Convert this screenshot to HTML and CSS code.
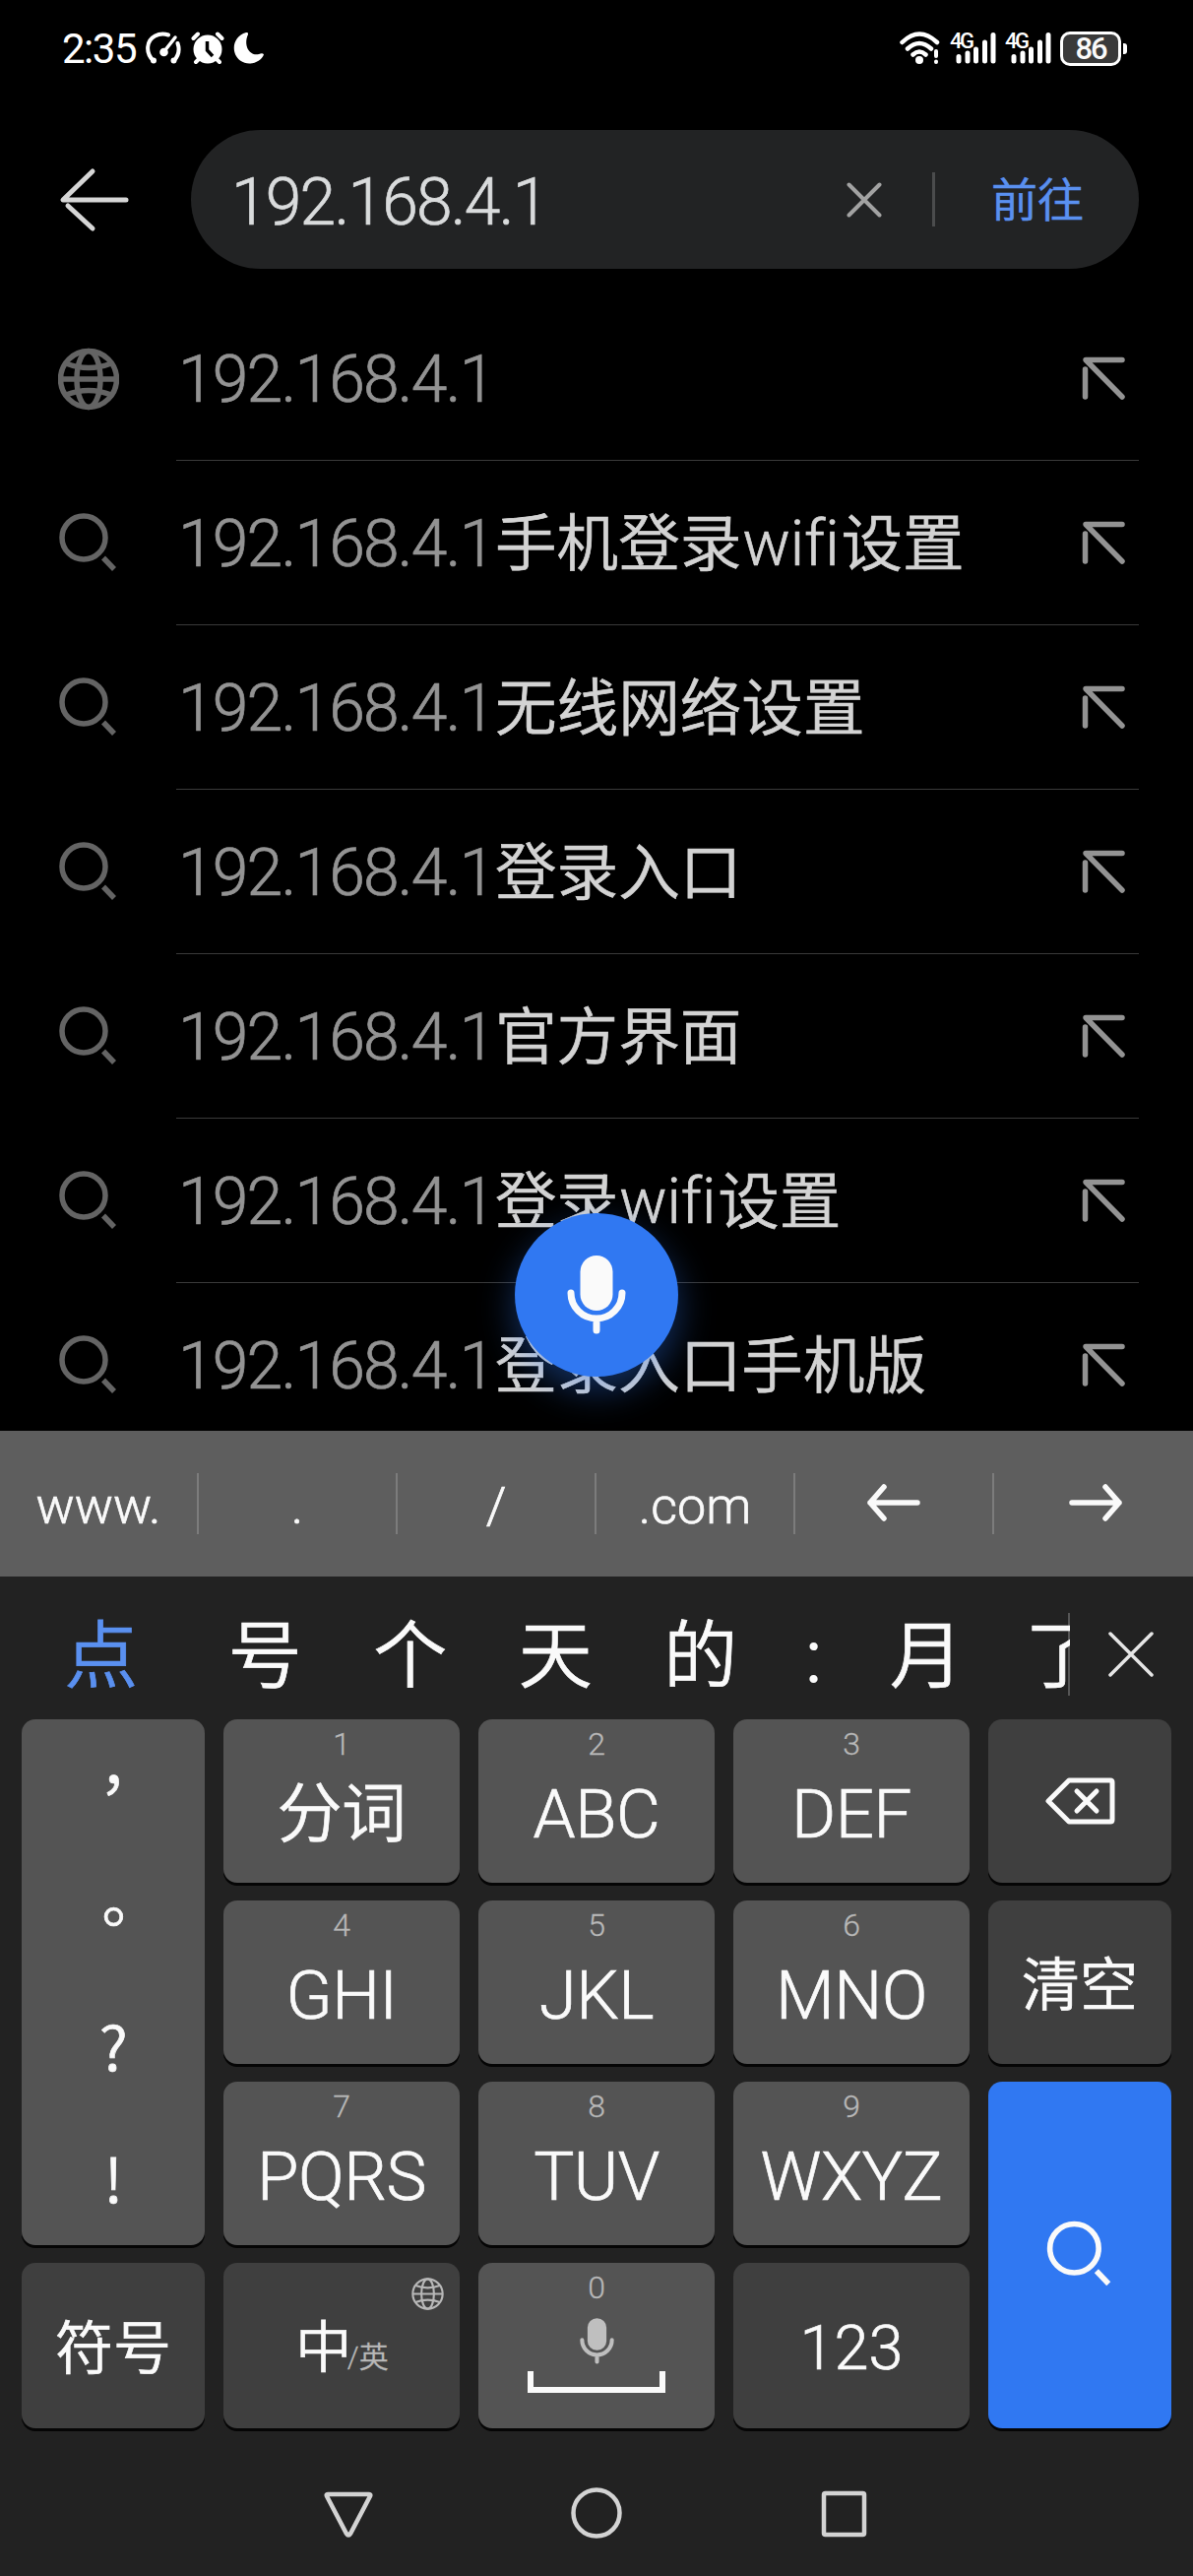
FILE: index.html
```
<!DOCTYPE html>
<html lang="zh-CN">
<head>
  <meta charset="UTF-8">
  <title>192.168.4.1</title>
  <link rel="stylesheet" href="styles.css">
</head>
<body>
  <!-- shared icons -->
  <svg class="defs" width="0" height="0">
    <symbol id="globe" viewBox="0 0 62 62">
      <g fill="none" stroke="currentColor">
        <circle cx="31" cy="31" r="28.5"/>
        <ellipse cx="31" cy="31" rx="12" ry="28.5"/>
        <path d="M3 31H59M8 15Q31 24 54 15M8 47Q31 38 54 47"/>
      </g>
    </symbol>
    <symbol id="search" viewBox="0 0 62 64">
      <g fill="none" stroke="currentColor">
        <circle cx="26" cy="26" r="22"/>
        <path d="M46 46.500L57 58"/>
      </g>
    </symbol>
    <symbol id="fill" viewBox="0 0 44 44">
      <path d="M41 3.500H4L41 41M3.500 13V41" fill="none" stroke="currentColor" stroke-width="5.500" stroke-linecap="round" stroke-linejoin="round"/>
    </symbol>
    <symbol id="mic" viewBox="0 0 60 80">
      <rect x="13.500" y="0" width="33" height="56" rx="16.500" fill="currentColor"/>
      <path d="M4 38a26 26 0 0 0 52 0M30 65V76" fill="none" stroke="currentColor" stroke-width="7" stroke-linecap="round"/>
    </symbol>
    <symbol id="signal" viewBox="0 0 42 34">
      <path d="M4 25.500V30M13 22V30M21.500 18V30M30.500 11V30M39 3.500V30" stroke="currentColor" stroke-width="5" stroke-linecap="round"/>
    </symbol>
  </svg>

  <div class="screen">
    <header class="status">
      <span class="time">2:35</span>
      <svg class="gauge" width="36" height="34" viewBox="0 0 36 34">
        <g fill="none" stroke="#fff" stroke-width="4" stroke-linecap="round">
          <path d="M8 30C-1 21 1 9 9.500 4.500Q16 1 23 3.500"/>
          <path d="M32.500 12Q36 22 28.500 30"/>
          <path d="M19 20L30 6" stroke-width="3.500"/>
        </g>
        <circle cx="18.500" cy="21" r="4.300" fill="#fff"/>
        <circle cx="8" cy="29.500" r="3" fill="#fff"/><circle cx="28.500" cy="29.500" r="3" fill="#fff"/>
      </svg>
      <svg class="alarm" width="34" height="34" viewBox="0 0 34 34">
        <circle cx="17" cy="18" r="14.500" fill="#fff"/>
        <path d="M2.500 7L7 2.500M31.500 7L27 2.500M8 28L5 31M26 28L29 31" stroke="#fff" stroke-width="4" stroke-linecap="round"/>
        <path d="M16.500 10V19L22 25" fill="none" stroke="#000" stroke-width="3.500"/>
      </svg>
      <svg class="moon" width="32" height="34" viewBox="0 0 32 34">
        <path d="M13 1C-1 5-3 22 7 29.500C16 36 28 31 31 23.500Q30 21.500 26 23C16 25 10 14 15 3Q15.500.500 13 1Z" fill="#fff"/>
      </svg>
      <span class="spacer"></span>
      <svg class="wifi" width="42" height="34" viewBox="0 0 42 34">
        <g fill="none" stroke="#fff" stroke-width="4.500" stroke-linecap="round">
          <path d="M2.500 11Q20 -6 38 11M8 17.500Q20 6.500 32 17.500M13.500 23.500Q20 17.500 26.500 23.500"/>
        </g>
        <circle cx="20" cy="29" r="4" fill="#fff"/>
        <path d="M37 20V25M37 30.500V31" stroke="#fff" stroke-width="4" stroke-linecap="round"/>
      </svg>
      <span class="cell"><b>4G</b><svg width="42" height="34"><use href="#signal"/></svg></span>
      <span class="cell"><b>4G</b><svg width="42" height="34"><use href="#signal"/></svg></span>
      <span class="battery">86</span>
    </header>

    <div class="address">
      <svg class="back" width="72" height="66" viewBox="0 0 72 66">
        <path d="M34 4L4 33H68M9 39L34 62" fill="none" stroke="#d6d6d6" stroke-width="5" stroke-linecap="round" stroke-linejoin="round"/>
      </svg>
      <div class="pill">
        <span class="url">192.168.4.1</span>
        <svg class="clear" width="36" height="36" viewBox="0 0 36 36">
          <path d="M2.500 2.500L33.500 33.500M33.500 2.500L2.500 33.500" stroke="#a2a2a2" stroke-width="4" stroke-linecap="round"/>
        </svg>
        <span class="bar"></span>
        <span class="go">前往</span>
      </div>
    </div>

    <main class="results">
      <div class="row"><svg class="lead"><use href="#globe"/></svg><div class="line"><span class="ip">192.168.4.1</span><svg class="fill"><use href="#fill"/></svg></div></div>
      <div class="row"><svg class="lead"><use href="#search"/></svg><div class="line"><span class="ip">192.168.4.1</span>手机登录<i>wifi</i>设置<svg class="fill"><use href="#fill"/></svg></div></div>
      <div class="row"><svg class="lead"><use href="#search"/></svg><div class="line"><span class="ip">192.168.4.1</span>无线网络设置<svg class="fill"><use href="#fill"/></svg></div></div>
      <div class="row"><svg class="lead"><use href="#search"/></svg><div class="line"><span class="ip">192.168.4.1</span>登录入口<svg class="fill"><use href="#fill"/></svg></div></div>
      <div class="row"><svg class="lead"><use href="#search"/></svg><div class="line"><span class="ip">192.168.4.1</span>官方界面<svg class="fill"><use href="#fill"/></svg></div></div>
      <div class="row"><svg class="lead"><use href="#search"/></svg><div class="line"><span class="ip">192.168.4.1</span>登录<i>wifi</i>设置<svg class="fill"><use href="#fill"/></svg></div></div>
      <div class="row"><svg class="lead"><use href="#search"/></svg><div class="line"><span class="ip">192.168.4.1</span>登录入口手机版<svg class="fill"><use href="#fill"/></svg></div></div>
      <div class="voice"><svg width="60" height="80"><use href="#mic"/></svg></div>
    </main>

    <section class="keyboard">
      <div class="shortcuts">
        <span>www.</span>
        <span>.</span>
        <span>/</span>
        <span>.com</span>
        <span><svg width="54" height="38" viewBox="0 0 54 38"><path d="M17 3L3 19L17 35M3 19H51" fill="none" stroke="#fafafa" stroke-width="5.500" stroke-linecap="round" stroke-linejoin="round"/></svg></span>
        <span><svg width="54" height="38" viewBox="0 0 54 38"><path d="M37 3L51 19L37 35M51 19H3" fill="none" stroke="#fafafa" stroke-width="5.500" stroke-linecap="round" stroke-linejoin="round"/></svg></span>
      </div>

      <div class="candidates">
        <div class="words">
          <span class="first">点</span><span>号</span><span>个</span><span>天</span><span>的</span><span class="colon">:</span><span>月</span><span class="last">了</span>
        </div>
        <svg class="close" width="46" height="46" viewBox="0 0 46 46">
          <path d="M2 2L44 44M44 2L2 44" stroke="#e6e6e6" stroke-width="3.500" stroke-linecap="round"/>
        </svg>
      </div>

      <div class="keys">
        <div class="key marks"><span>，</span><span>。</span><span>?</span><span>!</span></div>
        <div class="key"><small>1</small><span class="cn">分词</span></div>
        <div class="key"><small>2</small><span>ABC</span></div>
        <div class="key"><small>3</small><span>DEF</span></div>
        <div class="key dark">
          <svg width="71" height="48" viewBox="0 0 71 48"><g fill="none" stroke="#fafafa" stroke-width="5" stroke-linecap="round" stroke-linejoin="round"><path d="M24 3H66Q68 3 68 5V43Q68 45 66 45H24L3 24Z"/><path d="M32 14L52 34M52 14L32 34"/></g></svg>
        </div>
        <div class="key"><small>4</small><span>GHI</span></div>
        <div class="key"><small>5</small><span>JKL</span></div>
        <div class="key"><small>6</small><span>MNO</span></div>
        <div class="key dark word">清空</div>
        <div class="key"><small>7</small><span>PQRS</span></div>
        <div class="key"><small>8</small><span>TUV</span></div>
        <div class="key"><small>9</small><span>WXYZ</span></div>
        <div class="key enter"><svg width="70" height="72"><use href="#search"/></svg></div>
        <div class="key dark word">符号</div>
        <div class="key dark lang"><span>中</span><em>/英</em><svg class="mini"><use href="#globe"/></svg></div>
        <div class="key space"><small>0</small><svg width="35" height="47"><use href="#mic"/></svg><div class="bracket"></div></div>
        <div class="key dark num">123</div>
      </div>

      <nav class="nav">
        <svg width="52" height="52" viewBox="0 0 52 52"><path d="M5 7H47Q49 7 48 9L28 47Q26 50 24 47L4 9Q3 7 5 7Z" fill="none" stroke="#d3d3d3" stroke-width="4.500"/></svg>
        <svg width="52" height="52" viewBox="0 0 52 52"><circle cx="26" cy="26" r="23.500" fill="none" stroke="#d3d3d3" stroke-width="4.500"/></svg>
        <svg width="52" height="52" viewBox="0 0 52 52"><rect x="5" y="6" width="41" height="42" rx="1.500" fill="none" stroke="#d3d3d3" stroke-width="4.500"/></svg>
      </nav>
    </section>
  </div>
</body>
</html>
```
FILE: styles.css
```
* {
  box-sizing: border-box;
}

body {
  margin: 0;
  background: #000;
  font-family: Roboto, "Noto Sans CJK SC", sans-serif;
  font-weight: 350;
  color: #fafafa;
  -webkit-text-stroke-width: 0.7px;
}

svg {
  display: block;
  flex: none;
}

.defs {
  position: absolute;
}

.screen {
  width: 1212px;
  height: 2616px;
  overflow: hidden;
  display: flex;
  flex-direction: column;
}

/* status bar */
.status {
  height: 132px;
  padding: 32px 73px 0 63px;
  display: flex;
  align-items: flex-start;
  -webkit-text-stroke-width: 0;
}

.time {
  width: 85px;
  font-size: 42px;
  line-height: 36px;
  font-weight: 400;
  letter-spacing: -1.5px;
  color: #fff;
}

.alarm {
  margin-left: 10px;
}

.moon {
  margin-left: 9px;
}

.spacer {
  flex: 1;
}

.cell {
  position: relative;
  width: 46px;
  margin-left: 9px;
  color: #fff;
}

.cell + .cell {
  margin-left: 10px;
}

.cell svg {
  margin-left: 5px;
}

.cell b {
  position: absolute;
  left: 0;
  top: 0;
  font-size: 22px;
  line-height: 20px;
  font-weight: 500;
  letter-spacing: -2.5px;
}

.battery {
  position: relative;
  width: 62px;
  height: 35px;
  margin-left: 10px;
  border: 3px solid #fff;
  border-radius: 10px;
  background: #3a3a3a;
  text-align: center;
  font-size: 31px;
  line-height: 30px;
  font-weight: 500;
  letter-spacing: -2px;
}

.battery::after {
  content: "";
  position: absolute;
  right: -9px;
  top: 9px;
  width: 4px;
  height: 11px;
  border-radius: 0 3px 3px 0;
  background: #fff;
}

/* address bar */
.address {
  height: 141px;
  margin-bottom: 28px;
  padding: 0 55px 0 60px;
  display: flex;
  align-items: center;
}

.pill {
  flex: 1;
  height: 141px;
  margin-left: 62px;
  padding: 0 56px 0 41px;
  border-radius: 71px;
  background: #222324;
  display: flex;
  align-items: center;
}

.url {
  flex: 1;
  padding-top: 5px;
  font-size: 66px;
  letter-spacing: -1.8px;
  color: #d9dbdc;
}

.bar {
  width: 3px;
  height: 55px;
  margin: 0 57px 0 51px;
  background: #4b4c4d;
}

.go {
  padding-top: 3px;
  font-size: 47px;
  line-height: 60px;
  color: #5a90f0;
}

/* suggestions */
.results {
  position: relative;
  height: 1152px;
  overflow: hidden;
}

.row {
  height: 167px;
  padding: 0 55px 0 59px;
  display: flex;
  align-items: center;
}

.lead {
  width: 62px;
  height: 64px;
  color: #646464;
  stroke-width: 5.5px;
}

.line {
  flex: 1;
  height: 167px;
  margin-left: 58px;
  padding: 4px 14px 0 2px;
  border-bottom: 1px solid #3a3a3a;
  display: flex;
  align-items: center;
  font-size: 62.6px;
  line-height: 80px;
  color: #d3d3d3;
  white-space: nowrap;
}

.line i {
  width: 101px;
  padding-left: 1px;
  font-style: normal;
  font-size: 64px;
  font-variant-ligatures: none;
}

.ip {
  width: 322px;
  font-size: 66px;
  letter-spacing: -1.8px;
  color: #939393;
}

.fill {
  width: 44px;
  height: 44px;
  margin: -4px 0 0 auto;
  color: #939393;
}

.voice {
  position: absolute;
  left: 523px;
  top: 931px;
  width: 166px;
  height: 166px;
  border-radius: 50%;
  background: #3078f2;
  box-shadow: 0 14px 36px rgba(48, 120, 242, 0.4);
  display: flex;
  align-items: center;
  justify-content: center;
}

/* keyboard */
.keyboard {
  flex: 1;
  background: #222;
}

.shortcuts {
  height: 148px;
  background: #5e5e5e;
  display: grid;
  grid-template-columns: repeat(6, 1fr);
  align-items: center;
}

.shortcuts span {
  height: 62px;
  border-right: 2px solid #7c7c7c;
  display: flex;
  align-items: center;
  justify-content: center;
  padding-top: 6px;
  font-size: 52px;
  line-height: 62px;
}

.shortcuts span:last-child {
  border-right: none;
  padding-left: 3px;
}

.shortcuts svg {
  margin-top: -8px;
}

.candidates {
  height: 145px;
  padding: 12px 40px 0 29px;
  display: flex;
  align-items: center;
  justify-content: space-between;
}

.words {
  width: 1058px;
  height: 120px;
  overflow: hidden;
  display: flex;
  font-size: 75px;
  line-height: 124px;
  background: linear-gradient(#555, #555) right center / 2px 84px no-repeat;
}

.words span {
  flex: none;
  width: 147.5px;
  text-align: center;
}

.words .first {
  margin-right: 19px;
  color: #5a90f0;
}

.words .colon {
  width: 82px;
  -webkit-text-stroke-width: 2px;
}

.words .last {
  width: 128px;
}

.keys {
  padding: 0 22px;
  display: grid;
  grid-template-columns: 186px 240px 240px 240px 186px;
  grid-template-rows: 166px 166px 166px 168px;
  column-gap: 19px;
  row-gap: 18px;
}

.key {
  border-radius: 14px;
  background: #545454;
  box-shadow: 0 3px 0 #050505;
  display: flex;
  flex-direction: column;
  align-items: center;
  font-size: 69px;
  line-height: 80px;
}

.key small {
  margin-top: 8px;
  font-size: 32px;
  line-height: 34px;
  color: #b8b8b8;
  -webkit-text-stroke-width: 0.3px;
}

.key span {
  margin-top: 15px;
  letter-spacing: -0.5px;
}

.key .cn {
  font-size: 66px;
}

.marks {
  grid-row: span 3;
  font-family: "Noto Sans CJK TC", sans-serif;
  font-size: 62px;
  line-height: 126px;
}

.marks span {
  height: 135px;
  margin: 0;
}

.dark {
  background: #3f3f3f;
  justify-content: center;
}

.word {
  padding-top: 8px;
  font-size: 59px;
}

.enter {
  grid-row: span 2;
  background: #3078f2;
  justify-content: center;
  stroke-width: 5px;
}

.lang {
  position: relative;
  flex-direction: row;
  align-items: baseline;
  padding-left: 1px;
  line-height: 174px;
}

.lang span {
  margin: 0;
  font-size: 57px;
}

.lang em {
  margin-left: -4px;
  font-style: normal;
  font-size: 30px;
  color: #b8b8b8;
  -webkit-text-stroke-width: 0.3px;
}

.mini {
  position: absolute;
  top: 15px;
  right: 16px;
  width: 33px;
  height: 33px;
  color: #b8b8b8;
  stroke-width: 4px;
}

.space svg {
  margin-top: 14px;
  color: #bfbfbf;
}

.bracket {
  width: 140px;
  height: 22px;
  margin-top: 7px;
  border: 6px solid #fafafa;
  border-top: none;
}

.num {
  padding-top: 5px;
  font-size: 63px;
}

/* system navigation */
.nav {
  padding-top: 60px;
  display: flex;
  justify-content: center;
  gap: 200px;
}
```
